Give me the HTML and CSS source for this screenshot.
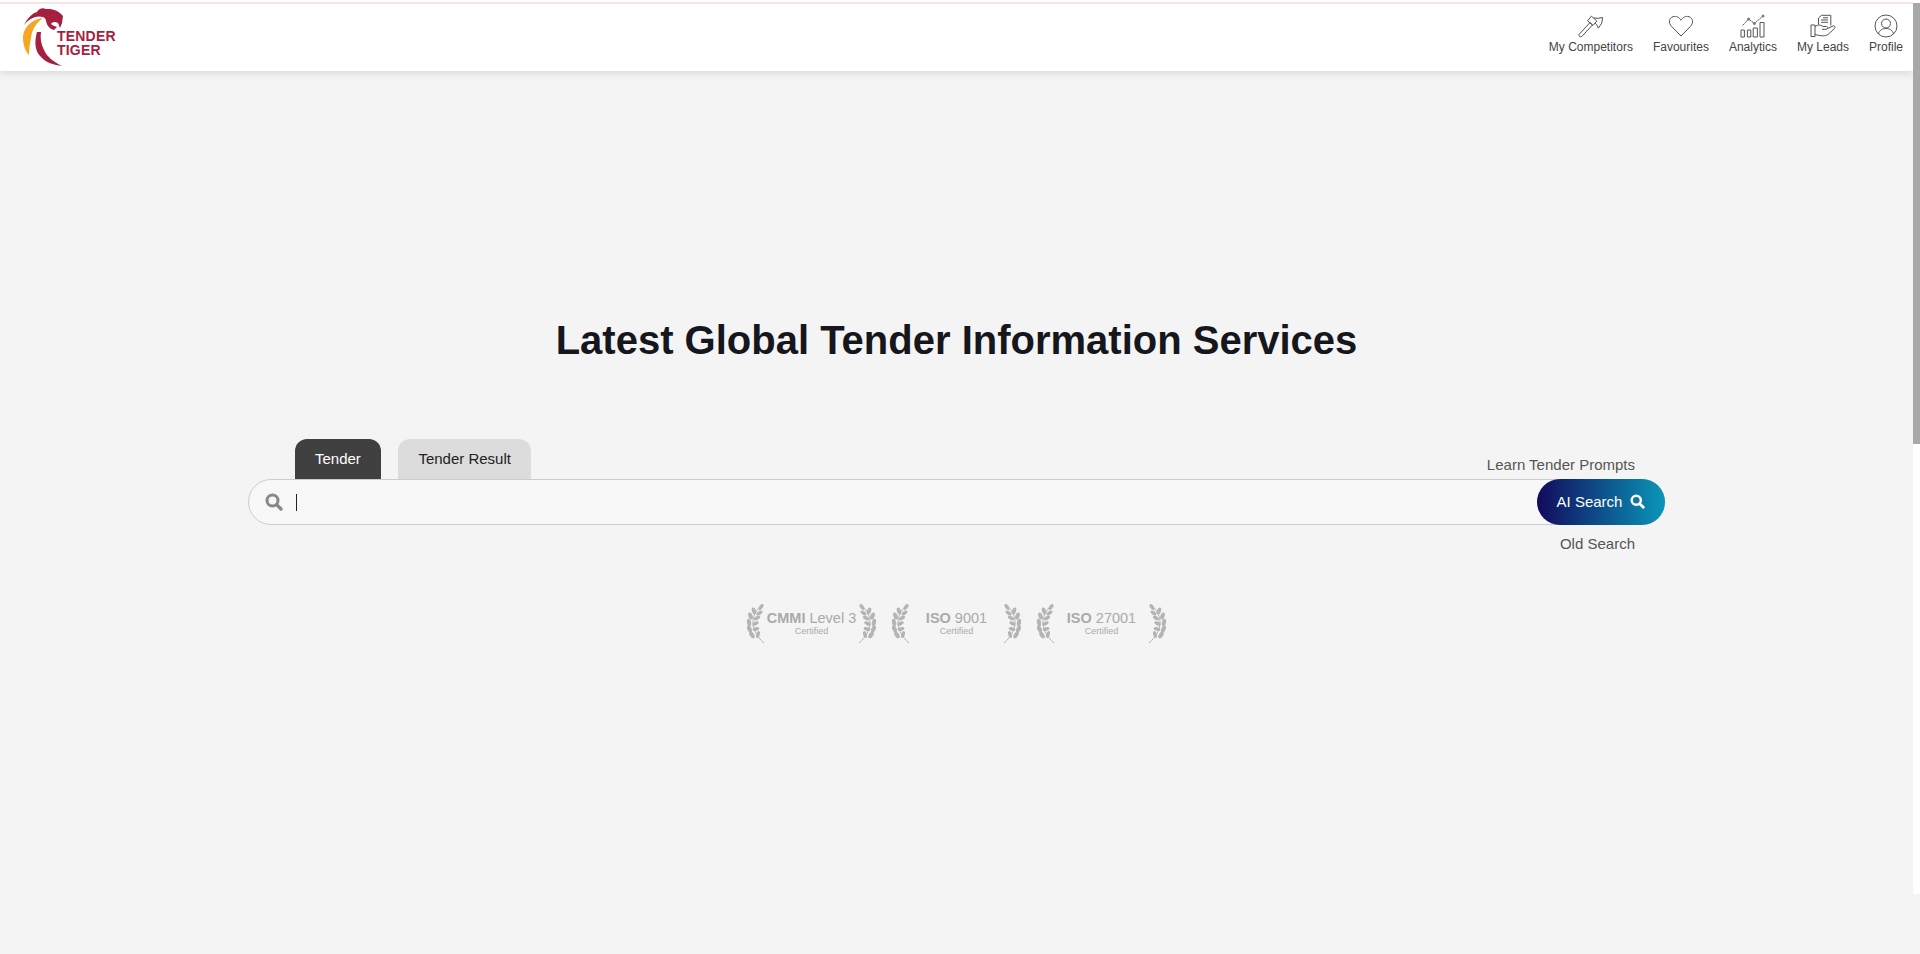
FILE: index.html
```html
<!DOCTYPE html>
<html lang="en">
<head>
    <meta charset="UTF-8">
    <meta name="viewport" content="width=device-width, initial-scale=1.0">
    <title>Tender Tiger</title>
    <link rel="stylesheet" href="styles.css">
</head>
<body>
    <svg class="defs" width="0" height="0">
        <symbol id="laurel" viewBox="0 0 20 40">
            <path d="M14 3 C5 11 3 26 18 39" class="laurel-stem"/>
            <g class="laurel-leaf">
                <ellipse cx="15" cy="3" rx="1.8" ry="3.4" transform="rotate(35 15 3)"/>
                <ellipse cx="8" cy="7" rx="2" ry="3.6" transform="rotate(-20 8 7)"/>
                <ellipse cx="13.5" cy="9" rx="1.8" ry="3.4" transform="rotate(55 13.5 9)"/>
                <ellipse cx="4.5" cy="12" rx="2.1" ry="3.7" transform="rotate(-20 4.5 12)"/>
                <ellipse cx="11" cy="14" rx="1.8" ry="3.4" transform="rotate(60 11 14)"/>
                <ellipse cx="3" cy="18.5" rx="2.1" ry="3.8" transform="rotate(-10 3 18.5)"/>
                <ellipse cx="9.5" cy="19.5" rx="1.8" ry="3.4" transform="rotate(65 9.5 19.5)"/>
                <ellipse cx="3.5" cy="25" rx="2.1" ry="3.8" transform="rotate(-25 3.5 25)"/>
                <ellipse cx="10" cy="25" rx="1.8" ry="3.4" transform="rotate(75 10 25)"/>
                <ellipse cx="6" cy="31" rx="2.1" ry="3.8" transform="rotate(-35 6 31)"/>
                <ellipse cx="12" cy="30.5" rx="1.8" ry="3.6" transform="rotate(15 12 30.5)"/>
            </g>
        </symbol>
        <symbol id="search" viewBox="0 0 18 18">
            <circle cx="7.5" cy="7.5" r="5.5" fill="none" stroke="currentColor" stroke-width="3"/>
            <path d="M11.6 11.6 L16 16" stroke="currentColor" stroke-width="3.4" stroke-linecap="round"/>
        </symbol>
    </svg>

    <header class="topbar">
        <div class="topline"></div>
        <div class="topbar-inner">
            <a class="logo">
                <svg class="logo-mark" width="46" height="62" viewBox="0 0 46 62">
                    <path class="logo-red" d="M6 20 C10 12 15 8 19 7 C21 3 25 2.5 28 4 C35 3.5 41 6 45 11 L44 18 L42 23 L40 18 C37 16 34 17 33 19 C35 21 38 21 39 22 L36 25 C32 24 29 21 28 16 C28 14 27 13 25 12 C17 10 11 14 6 20 Z"/>
                    <path class="logo-yellow" d="M25 13 C15 14 5 22 5 33 C5 41 8 47 11 50 C11 44 12 38 13 33 C14 24 19 17 25 13 Z"/>
                    <path class="logo-red" d="M19 27 C16 38 17 47 24 53 C29 58 36 60 44 61 C36 57 29 52 26 45 C23 39 22 33 23 27 Z"/>
                </svg>
                <span class="logo-text">TENDER<br>TIGER</span>
            </a>
            <nav class="topnav">
                <a class="nav-item">
                    <svg class="nav-icon" width="26" height="23" viewBox="0 0 26 23">
                        <path d="M1.2 19.8 L12 8 L14.6 10.4 L3.8 22 Q2.6 22.8 1.4 21.8 Q.6 20.8 1.2 19.8 Z"/>
                        <path d="M9.6 6.4 L13.4 1.6 L18.8 6.6 L15 11 Z"/>
                        <path d="M15.5 3.4 Q20 4.4 24.6 3 Q25 9 20.4 13.6 Q19.4 10.6 17 8.4"/>
                    </svg>
                    <span>My Competitors</span>
                </a>
                <a class="nav-item">
                    <svg class="nav-icon" width="26" height="23" viewBox="0 0 26 23">
                        <path d="M13 21.5 L3.6 12 C.2 8.5 1 3.4 5 2.2 C8.4 1.2 11.6 3 13 5.8 C14.4 3 17.6 1.2 21 2.2 C25 3.4 25.8 8.5 22.4 12 Z"/>
                    </svg>
                    <span>Favourites</span>
                </a>
                <a class="nav-item">
                    <svg class="nav-icon" width="26" height="23" viewBox="0 0 26 23">
                        <path d="M1 15.5 H4.4 V22.5 H1 Z M7.4 15.5 H10.8 V22.5 H7.4 Z M13.2 13.5 H17.4 V22.5 H13.2 Z M20 8 H24 V22.5 H20 Z"/>
                        <path d="M2.5 11 L8.6 4.6 L14.4 9 L22.6 1.8" stroke-dasharray="2 .6"/>
                        <circle cx="8.6" cy="4.6" r="1"/>
                        <circle cx="14.4" cy="9" r="1"/>
                        <circle cx="23" cy="1.6" r="1"/>
                    </svg>
                    <span>Analytics</span>
                </a>
                <a class="nav-item">
                    <svg class="nav-icon" width="26" height="23" viewBox="0 0 26 23">
                        <path d="M1 10.5 H5 V22 H1 Z"/>
                        <path d="M5 12 C8 10 10.5 10 13 12 H16.5 C18 12 18 14.8 16 14.8 H12 M17.5 14 L23 11.5 C25 11 25.8 13 24 14.5 L18 20 C15 22 11 21.5 5 20"/>
                        <path d="M8.5 10 V3.5 L11.5 .8 H20.8 V11"/>
                        <path d="M11 5.5 H18 M11 7.8 H18 M13 3.3 H18"/>
                    </svg>
                    <span>My Leads</span>
                </a>
                <a class="nav-item">
                    <svg class="nav-icon" width="24" height="24" viewBox="0 0 24 24">
                        <circle cx="12" cy="12" r="11"/>
                        <circle cx="12" cy="9.5" r="4.5"/>
                        <path d="M4.5 20 C5.5 16 8.5 14.5 12 14.5 C15.5 14.5 18.5 16 19.5 20"/>
                    </svg>
                    <span>Profile</span>
                </a>
            </nav>
        </div>
    </header>

    <main class="hero">
        <h1 class="hero-title">Latest Global Tender Information Services</h1>

        <div class="search-wrap">
            <div class="tab-row">
                <div class="tabs">
                    <a class="tab tab-active">Tender</a>
                    <a class="tab">Tender Result</a>
                </div>
                <a class="side-link side-link-top">Learn Tender Prompts</a>
            </div>
            <div class="search-box">
                <svg class="search-icon" width="18" height="18"><use href="#search"/></svg>
                <span class="caret"></span>
                <button class="ai-btn">AI Search
                    <svg class="ai-icon" width="15" height="15"><use href="#search"/></svg>
                </button>
            </div>
            <a class="side-link side-link-bottom">Old Search</a>
        </div>

        <div class="certs">
            <div class="cert">
                <svg class="laurel" width="20" height="40"><use href="#laurel"/></svg>
                <div class="cert-text">
                    <div class="cert-name"><b>CMMI</b> Level 3</div>
                    <div class="cert-sub">Certified</div>
                </div>
                <svg class="laurel laurel-flip" width="20" height="40"><use href="#laurel"/></svg>
            </div>
            <div class="cert">
                <svg class="laurel" width="20" height="40"><use href="#laurel"/></svg>
                <div class="cert-text">
                    <div class="cert-name"><b>ISO</b> 9001</div>
                    <div class="cert-sub">Certified</div>
                </div>
                <svg class="laurel laurel-flip" width="20" height="40"><use href="#laurel"/></svg>
            </div>
            <div class="cert">
                <svg class="laurel" width="20" height="40"><use href="#laurel"/></svg>
                <div class="cert-text">
                    <div class="cert-name"><b>ISO</b> 27001</div>
                    <div class="cert-sub">Certified</div>
                </div>
                <svg class="laurel laurel-flip" width="20" height="40"><use href="#laurel"/></svg>
            </div>
        </div>
    </main>

    <!-- page scrollbar -->
    <div class="scrollbar"><div class="scroll-thumb"></div></div>
</body>
</html>
```

FILE: styles.css
```css
* {
    box-sizing: border-box;
}

html, body {
    margin: 0;
    height: 954px;
    overflow: hidden;
}

body {
    background: #f4f4f4;
    color: #16161d;
    font-family: "Liberation Sans", Arial, sans-serif;
    position: relative;
}

.defs {
    position: absolute;
}

.topbar {
    width: 1913px;
    height: 71px;
    background: #fff;
    box-shadow: 0 2px 8px rgba(0, 0, 0, 0.12);
    padding-top: 2px;
}

.topline {
    height: 2px;
    background: #fce3e7;
}

.topbar-inner {
    display: flex;
    justify-content: space-between;
    align-items: flex-start;
    padding: 1px 10px 0 18px;
}

.logo {
    display: flex;
    align-items: flex-start;
    height: 62px;
}

.logo-mark {
    flex: none;
}

.logo-red {
    fill: #a51f3f;
}

.logo-yellow {
    fill: #f5a623;
}

.logo-text {
    margin: 24px 0 0 -7px;
    color: #a51f3f;
    font-size: 14px;
    font-weight: bold;
    line-height: 14px;
    letter-spacing: 0.2px;
}

.topnav {
    display: flex;
    gap: 20px;
    padding-top: 9px;
}

.nav-item {
    display: flex;
    flex-direction: column;
    align-items: center;
    gap: 2px;
    color: #444;
    font-size: 12px;
    line-height: 14px;
}

.nav-icon {
    fill: none;
    stroke: #555;
    stroke-width: 1;
    height: 24px;
}

.hero {
    width: 1913px;
    display: flex;
    flex-direction: column;
    align-items: center;
    padding-top: 246px;
}

.hero-title {
    margin: 0 0 76px;
    font-size: 40px;
    line-height: 46px;
    font-weight: bold;
}

.search-wrap {
    width: 1417px;
    display: flex;
    flex-direction: column;
}

.tab-row {
    display: flex;
    justify-content: space-between;
    align-items: flex-end;
    padding-left: 47px;
}

.tabs {
    display: flex;
    gap: 17px;
}

.tab {
    height: 40px;
    padding: 0 20.5px 2px;
    display: flex;
    align-items: center;
    background: #dcdcdc;
    border-radius: 12px 12px 0 0;
    color: #222;
    font-size: 15px;
}

.tab-active {
    padding: 0 20px 2px;
    background: #404040;
    color: #fff;
}

.side-link {
    color: #555;
    font-size: 15px;
    line-height: 17px;
    align-self: flex-end;
    margin-right: 30px;
}

.side-link-top {
    margin-bottom: 6px;
}

.side-link-bottom {
    margin-top: 10px;
}

.search-box {
    height: 46px;
    display: flex;
    align-items: center;
    background: #f8f8f8;
    border: 1px solid #ccc;
    border-radius: 23px;
    padding-left: 16px;
}

.search-icon {
    color: #888;
}

.caret {
    width: 1px;
    height: 17px;
    margin-left: 13px;
    background: #222;
}

.ai-btn {
    margin: -1px -1px -1px auto;
    width: 128px;
    height: 46px;
    padding: 0 0 2px;
    display: flex;
    align-items: center;
    justify-content: center;
    gap: 8px;
    border: 0;
    border-radius: 23px;
    background: linear-gradient(90deg, #120a5c, #0a96b8);
    color: #fff;
    font-family: inherit;
    font-size: 15px;
}

.certs {
    margin-top: 52px;
    display: flex;
    gap: 14px;
}

.cert {
    display: flex;
    align-items: center;
    color: #aaa;
}

.cert-text {
    width: 91px;
    display: flex;
    flex-direction: column;
    align-items: center;
    padding-bottom: 2px;
}

.cert-name {
    font-size: 14.5px;
    line-height: 16px;
    white-space: nowrap;
}

.cert-sub {
    font-size: 9px;
    line-height: 10px;
}

.laurel-stem {
    fill: none;
    stroke: #b4b4b4;
    stroke-width: 1;
}

.laurel-leaf {
    fill: #b4b4b4;
}

.laurel-flip {
    transform: scaleX(-1);
}

.scrollbar {
    position: absolute;
    top: 0;
    right: 0;
    width: 7px;
    height: 894px;
    background: #fff;
    padding-top: 3px;
}

.scroll-thumb {
    height: 441px;
    background: #a8a8a8;
}
```
